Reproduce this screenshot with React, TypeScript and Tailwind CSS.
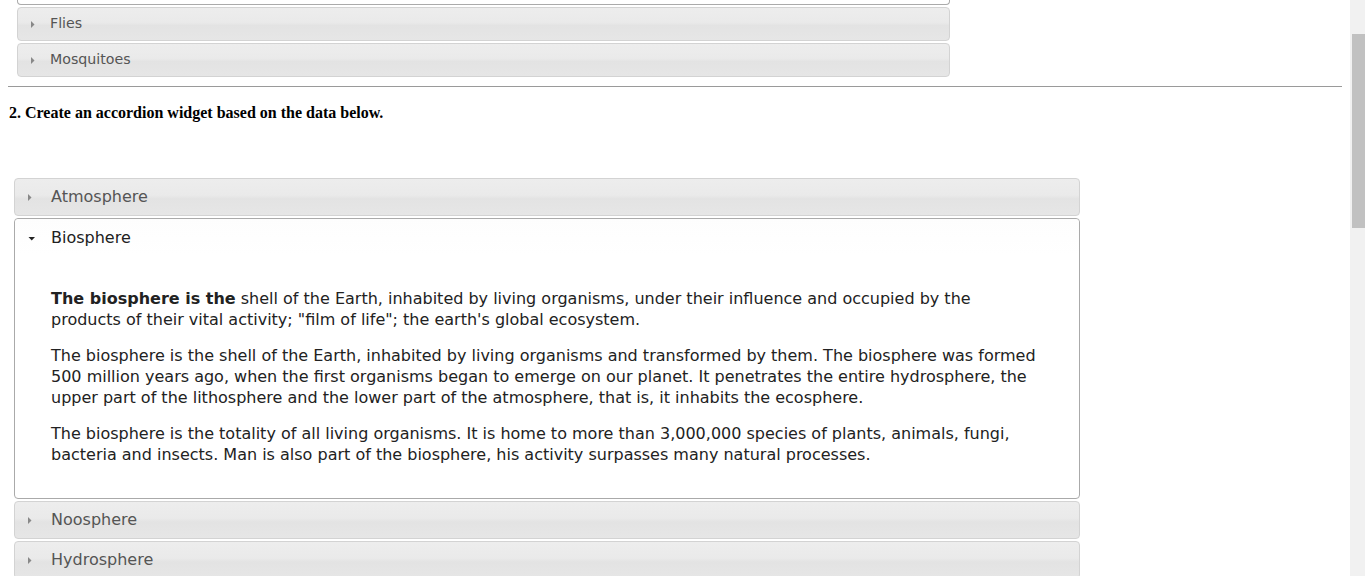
import React from 'react';

const headerIdle =
    'flex items-center border border-[#d3d3d3] rounded-[4px] bg-[linear-gradient(to_bottom,#ededed,#eaeaea_45%,#e3e3e3_55%,#e6e6e6)] text-[#555555]';

function IconEast() {
    return (
        <svg width="16" height="16" viewBox="0 0 16 16" className="shrink-0">
            <polygon points="5,5 8.5,8.5 5,12" fill="#888888" />
        </svg>
    );
}

function IconSouth() {
    return (
        <svg width="16" height="16" viewBox="0 0 16 16" className="shrink-0">
            <polygon points="6.5,7 13,7 9.75,10.5" fill="#222222" />
        </svg>
    );
}

export default function App() {
    const insects = ['Flies', 'Mosquitoes'];

    return (
        <div className="flex h-screen overflow-hidden bg-white">
            <main className="flex-1 px-2 font-['DejaVu_Sans',Verdana,sans-serif]">
                {/* first accordion, scrolled partly out of view */}
                <div className="ml-[9px] w-[933px] flex flex-col">
                    <div className="h-[5px] border-x border-b border-[#aaaaaa] rounded-b-[4px] bg-white" />
                    {insects.map((name) => (
                        <div key={name} className={`${headerIdle} mt-[2px] h-[34px] pl-[8px] text-[14.2px]`}>
                            <IconEast />
                            <span className="ml-[8px]">{name}</span>
                        </div>
                    ))}
                </div>

                <hr className="mt-[9px] border-t border-[#9a9a9a]" />

                <p className="mt-[17px] ml-px font-['Liberation_Serif',serif] font-bold text-[16px] text-black leading-[18px]">
                    2. Create an accordion widget based on the data below.
                </p>

                {/* second accordion */}
                <div className="ml-[6px] mt-[56px] w-[1066px] flex flex-col">
                    <div className={`${headerIdle} h-[38px] pl-[8px] text-[16px]`}>
                        <IconEast />
                        <span className="ml-[12px]">Atmosphere</span>
                    </div>

                    <div className="mt-[2px] border border-[#aaaaaa] rounded-[4px] bg-white text-[#222222]">
                        <div className="flex items-center h-[37px] pl-[7px] text-[16px] text-[#212121] bg-[linear-gradient(to_bottom,#fdfdfd,#ffffff)] rounded-t-[4px]">
                            <IconSouth />
                            <span className="ml-[13px]">Biosphere</span>
                        </div>
                        <div className="pl-[36px] pr-[36px] pt-[32px] pb-[33px] text-[16px] leading-[21px] flex flex-col gap-[15px]">
                            <p>
                                <b>The biosphere is the</b> shell of the Earth, inhabited by living organisms, under their influence and occupied by the products of their vital activity; "film of life"; the earth's global ecosystem.
                            </p>
                            <p>
                                The biosphere is the shell of the Earth, inhabited by living organisms and transformed by them. The biosphere was formed 500 million years ago, when the first organisms began to emerge on our planet. It penetrates the entire hydrosphere, the upper part of the lithosphere and the lower part of the atmosphere, that is, it inhabits the ecosphere.
                            </p>
                            <p>
                                The biosphere is the totality of all living organisms. It is home to more than 3,000,000 species of plants, animals, fungi, bacteria and insects. Man is also part of the biosphere, his activity surpasses many natural processes.
                            </p>
                        </div>
                    </div>

                    {['Noosphere', 'Hydrosphere'].map((name) => (
                        <div key={name} className={`${headerIdle} mt-[2px] h-[38px] shrink-0 pl-[8px] text-[16px]`}>
                            <IconEast />
                            <span className="ml-[12px]">{name}</span>
                        </div>
                    ))}
                </div>
            </main>

            {/* page scrollbar */}
            <div className="w-[15px] shrink-0 bg-[#f1f1f1] pl-[2px]">
                <div className="mt-[34px] h-[194px] bg-[#c1c1c1]" />
            </div>
        </div>
    );
}
